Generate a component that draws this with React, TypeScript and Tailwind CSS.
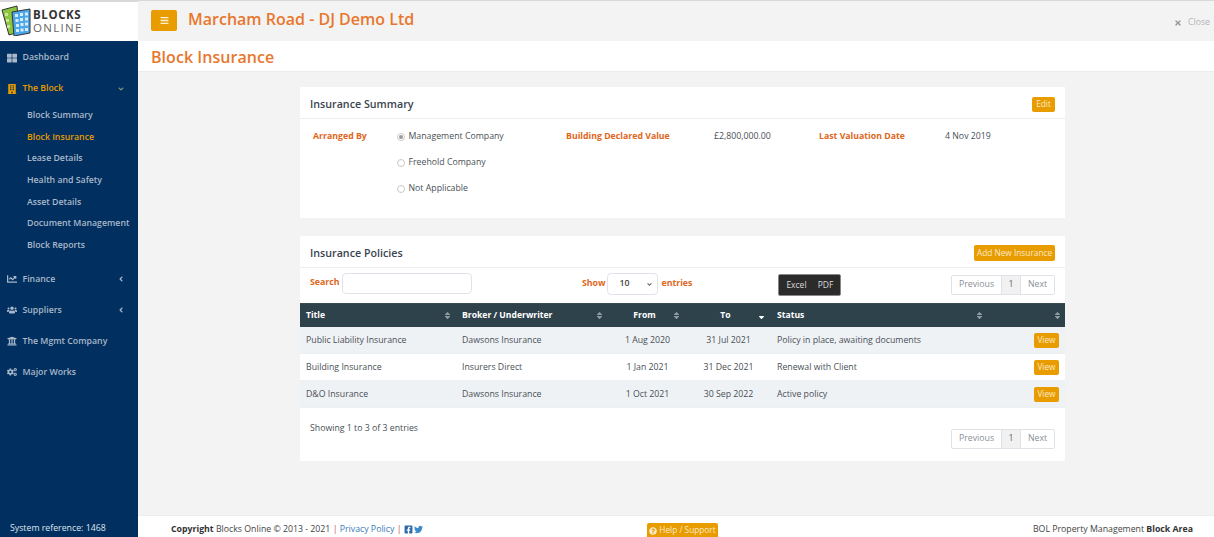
import React from "react";
import { FaThLarge, FaBuilding, FaChartLine, FaUsers, FaUniversity, FaCogs, FaBars, FaTimes, FaQuestionCircle, FaFacebookSquare, FaTwitter, FaSort, FaSortDown, FaAngleDown, FaAngleLeft } from "react-icons/fa";

const font = { fontFamily: '"Open Sans", "Liberation Sans", sans-serif' };

function Logo() {
  return (
    <div className="h-[41px] bg-white border-t-[2px] border-[#d8d8d8] flex items-start pl-[1px] pt-[2px] shrink-0">
      <svg width="31" height="32" viewBox="0 0 31 32" className="shrink-0">
        <path d="M1 6 L16 2 L18 28 L8 31 Z" fill="#8cc63f" stroke="#333" strokeWidth="1" />
        <path d="M11 8 L29 5 L29 29 L13 32 Z" fill="#4da6e8" stroke="#333" strokeWidth="1" />
        <g fill="#d5ecfb">
          <rect x="14" y="10" width="3" height="3" /><rect x="19" y="9" width="3" height="3" /><rect x="24" y="8.5" width="3" height="3" />
          <rect x="14.5" y="15" width="3" height="3" /><rect x="19" y="14" width="3" height="3" /><rect x="24" y="13.5" width="3" height="3" />
          <rect x="15" y="20" width="3" height="3" /><rect x="19.5" y="19" width="3" height="3" /><rect x="24" y="18.5" width="3" height="3" />
          <rect x="15" y="25" width="3" height="3" /><rect x="19.5" y="24.5" width="3" height="3" /><rect x="24" y="24" width="3" height="3" />
        </g>
        <g fill="#c8e59a">
          <rect x="4" y="9" width="3" height="3" /><rect x="5" y="15" width="3" height="3" /><rect x="6" y="21" width="3" height="3" />
        </g>
      </svg>
      <div className="ml-[1px] mt-[5px]">
        <div className="text-[11.5px] leading-[12px] font-bold text-[#333] tracking-[0.6px]">BLOCKS</div>
        <div className="text-[11.5px] leading-[14px] text-[#666] tracking-[1.3px]">ONLINE</div>
      </div>
    </div>
  );
}

function NavItem({ icon, label, gold, chevron, className }: { icon: React.ReactNode; label: string; gold?: boolean; chevron?: React.ReactNode; className?: string }) {
  return (
    <div className={`flex items-center h-[16px] pl-[7px] pr-[13px] text-[8.75px] ${gold ? "text-[#e89c00]" : "text-[#a9b8ca]"} ${className ?? ""}`}>
      <span className="w-[15.5px] flex items-center text-[10px]">{icon}</span>
      <span className="flex-1 font-semibold whitespace-nowrap">{label}</span>
      {chevron}
    </div>
  );
}

function Sidebar() {
  const sub = ["Block Summary", "Block Insurance", "Lease Details", "Health and Safety", "Asset Details", "Document Management", "Block Reports"];
  return (
    <aside className="w-[138px] shrink-0 bg-[#012f5f] flex flex-col">
      <Logo />
      <nav className="flex-1 flex flex-col pt-[9px]">
        <NavItem icon={<FaThLarge />} label="Dashboard" />
        <NavItem icon={<FaBuilding className="text-[#e89c00]" />} label="The Block" gold className="mt-[15px]" chevron={<FaAngleDown className="text-[8px] text-[#7f8f7a]" />} />
        <div className="mt-[8px] flex flex-col pl-[27px]">
          {sub.map((s, i) => (
            <div key={s} className={`h-[21.6px] flex items-center text-[8.75px] font-semibold whitespace-nowrap ${i === 1 ? "text-[#e89c00]" : "text-[#a9b8ca]"}`}>{s}</div>
          ))}
        </div>
        <NavItem icon={<FaChartLine />} label="Finance" className="mt-[15px]" chevron={<FaAngleLeft className="text-[8px]" />} />
        <NavItem icon={<FaUsers />} label="Suppliers" className="mt-[15px]" chevron={<FaAngleLeft className="text-[8px]" />} />
        <NavItem icon={<FaUniversity />} label="The Mgmt Company" className="mt-[15px]" />
        <NavItem icon={<FaCogs />} label="Major Works" className="mt-[15px]" />
        <div className="mt-auto h-[22px] pl-[10px] text-[8.75px] leading-[26px] text-[#dfe5ec]">System reference: 1468</div>
      </nav>
    </aside>
  );
}

function Btn({ children, className }: { children: React.ReactNode; className?: string }) {
  return <span className={`inline-flex items-center justify-center bg-[#e89c00] text-[#fbeacb] rounded-[2px] text-[8.3px] ${className ?? ""}`}>{children}</span>;
}

function Pager() {
  return (
    <div className="flex h-[20px] border border-[#dfe3e8] rounded-[2px] text-[8.75px] text-[#8a8f96]">
      <span className="w-[49px] flex items-center justify-center">Previous</span>
      <span className="w-[20px] flex items-center justify-center bg-[#f1f1f1] border-x border-[#dfe3e8] text-[#666]">1</span>
      <span className="w-[33px] flex items-center justify-center">Next</span>
    </div>
  );
}

const rows = [
  { t: "Public Liability Insurance", b: "Dawsons Insurance", f: "1 Aug 2020", o: "31 Jul 2021", s: "Policy in place, awaiting documents", shade: true },
  { t: "Building Insurance", b: "Insurers Direct", f: "1 Jan 2021", o: "31 Dec 2021", s: "Renewal with Client", shade: false },
  { t: "D&O Insurance", b: "Dawsons Insurance", f: "1 Oct 2021", o: "30 Sep 2022", s: "Active policy", shade: true },
];

function Th({ label, width, center, icon, pos, pad }: { label: string; width: string; center?: boolean; icon?: React.ReactNode; pos: string; pad?: string }) {
  return (
    <th className={`${width} relative p-0 pt-[1px] ${pad ?? "pl-[6px]"} pr-[12px] font-bold text-[8.6px] text-white ${center ? "text-center" : "text-left"}`}>
      {label}
      <span className={`absolute ${pos} top-[7px] text-[9px] text-[#8d9ba3]`}>{icon ?? <FaSort />}</span>
    </th>
  );
}

function Card({ title, action, children, className }: { title: string; action: React.ReactNode; children: React.ReactNode; className?: string }) {
  return (
    <section className={`bg-white ${className ?? ""}`}>
      <div className="h-[32px] pt-[3px] flex items-center justify-between pl-[10px] pr-[10px] border-b border-[#eceef1]">
        <h2 className="text-[10.7px] font-semibold text-[#3a4450]">{title}</h2>
        {action}
      </div>
      {children}
    </section>
  );
}

export default function App() {
  const label = "text-[8.75px] font-bold text-[#e0661c]";
  const val = "text-[8.75px] text-[#4a4f55]";
  return (
    <div className="w-[1214px] h-[537px] flex overflow-hidden bg-[#f3f3f3]" style={font}>
      <Sidebar />
      <div className="flex-1 flex flex-col min-w-0">
        <header className="h-[41px] shrink-0 border-t border-[#d8d8d8] flex items-center pl-[13px] pr-[4px] pb-[2px]">
          <Btn className="w-[26px] h-[21px] text-[#fdf1d8] text-[9px]"><FaBars /></Btn>
          <h1 className="ml-[11px] text-[16px] font-semibold text-[#e8772e] pb-[2px]">Marcham Road - DJ Demo Ltd</h1>
          <div className="ml-auto flex items-center gap-[6px] text-[8.75px] text-[#b4b4b4] pt-[5px]"><FaTimes className="text-[8px] text-[#999]" /> Close</div>
        </header>
        <div className="h-[31px] shrink-0 bg-white border-b border-[#ececec] flex items-center pl-[13px] pt-[1px]">
          <h2 className="text-[16px] font-semibold text-[#e8772e] tracking-[0.05px]">Block Insurance</h2>
        </div>
        <main className="flex-1 pt-[15px] pl-[162px] pr-[149px]">
          <Card title="Insurance Summary" action={<Btn className="w-[23px] h-[15px]">Edit</Btn>}>
            <div className="h-[99px] grid grid-cols-[84px_169px_148px_105px_126px_1fr] pl-[13px] pt-[11px] items-start">
              <div className={label}>Arranged By</div>
              <div className="flex flex-col gap-[14px] pt-[1px]">
                {["Management Company", "Freehold Company", "Not Applicable"].map((o, i) => (
                  <div key={o} className={`${val} flex items-center gap-[3.5px] h-[12px]`}>
                    <span className="w-[8px] h-[8px] rounded-full border border-[#c9c9c9] flex items-center justify-center">
                      {i === 0 && <span className="w-[4px] h-[4px] rounded-full bg-[#9a9a9a]" />}
                    </span>
                    {o}
                  </div>
                ))}
              </div>
              <div className={label}>Building Declared Value</div>
              <div className={val}>£2,800,000.00</div>
              <div className={label}>Last Valuation Date</div>
              <div className={val}>4 Nov 2019</div>
            </div>
          </Card>
          <Card className="mt-[18px]" title="Insurance Policies" action={<Btn className="w-[81px] h-[16px]">Add New Insurance</Btn>}>
            <div className="h-[35px] flex items-start pl-[10px] pr-[10px] pt-[5px]">
              <span className={`${label} mt-[3px] w-[32px]`}>Search</span>
              <span className="w-[130px] h-[21px] border border-[#dfe3ea] rounded-[4px] bg-white" />
              <span className={`${label} ml-[110px] mt-[4px]`}>Show</span>
              <span className="ml-[2px] w-[51px] h-[22px] border border-[#dfe3ea] rounded-[4px] flex items-center justify-between pl-[11px] pr-[4px] text-[8.75px] font-semibold text-[#444]">
                10 <FaAngleDown className="text-[7px] text-[#666]" />
              </span>
              <span className={`${label} ml-[3px] mt-[4px]`}>entries</span>
              <span className="ml-[86px] mt-[1px] w-[63px] h-[22px] bg-[#2b2b2b] rounded-[2px] border border-[#888] flex items-center justify-between px-[7px] text-[8.5px] text-[#ddd]">
                <span>Excel</span><span>PDF</span>
              </span>
              <span className="ml-auto mt-[2px]"><Pager /></span>
            </div>
            <table className="w-full table-fixed border-collapse">
              <thead>
                <tr className="h-[23px] bg-[#2e424b] border-t border-[#3a4a52]">
                  <Th label="Title" width="w-[156px]" pos="right-[4px]" />
                  <Th label="Broker / Underwriter" width="w-[149px]" pos="right-[1px]" />
                  <Th label="From" width="w-[85px]" center pos="right-[9px]" />
                  <Th label="To" width="w-[77px]" center pos="right-[1px]" icon={<FaSortDown className="text-white" />} />
                  <Th label="Status" width="w-[223px]" pad="pl-[10px]" pos="right-[6px]" />
                  <Th label="" width="w-[75px]" pos="right-[3px]" />
                </tr>
              </thead>
              <tbody>
                {rows.map((r) => (
                  <tr key={r.t} className={`h-[27px] border-b border-[#edf0f3] text-[8.75px] text-[#4a4f55] ${r.shade ? "bg-[#eff2f5]" : "bg-white"}`}>
                    <td className="p-0 pt-[1px] pl-[6px]">{r.t}</td>
                    <td className="p-0 pt-[1px] pl-[6px]">{r.b}</td>
                    <td className="p-0 pt-[1px] text-center">{r.f}</td>
                    <td className="p-0 pt-[1px] text-center">{r.o}</td>
                    <td className="p-0 pt-[1px] pl-[10px]">{r.s}</td>
                    <td className="p-0 pr-[6px]"><div className="flex justify-end pt-[1px]"><Btn className="w-[25px] h-[15px]">View</Btn></div></td>
                  </tr>
                ))}
              </tbody>
            </table>
            <div className="h-[53px] flex items-start justify-between px-[10px]">
              <span className={`${val} mt-[14px]`}>Showing 1 to 3 of 3 entries</span>
              <span className="mt-[21px]"><Pager /></span>
            </div>
          </Card>
        </main>
        <footer className="h-[22px] shrink-0 bg-white flex items-start pl-[33px] pr-[21px] text-[8.75px] text-[#444] relative border-t border-[#ededed]">
          <div className="mt-[7px] leading-[12px] flex items-center whitespace-nowrap">
            <b className="text-[#333]">Copyright</b>&nbsp;Blocks Online © 2013 - 2021&nbsp;<span className="text-[#c0504d]">|</span>&nbsp;<span className="text-[#3b7ab8]">Privacy Policy</span>&nbsp;<span className="text-[#c0504d]">|</span>&nbsp;<FaFacebookSquare className="text-[#2c6aa8] text-[9px]" /><FaTwitter className="ml-[1px] text-[#3b8bc9] text-[9px]" />
          </div>
          <span className="absolute left-[509px] top-[7px] w-[71px] h-[15px] bg-[#e89c00] rounded-t-[2px] text-[#fbeacb] flex items-center justify-center gap-[2px] text-[8.3px]"><FaQuestionCircle className="text-[8px]" />Help / Support</span>
          <div className="ml-auto mt-[7px] leading-[12px]">BOL Property Management <b className="text-[#333]">Block Area</b></div>
        </footer>
      </div>
    </div>
  );
}
